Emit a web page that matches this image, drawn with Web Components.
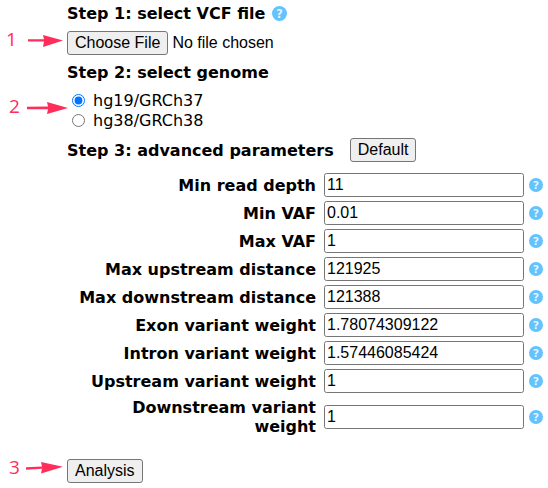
<!DOCTYPE html>
<html>
<head>
<meta charset="utf-8">
<style>
  html, body { margin: 0; padding: 0; background: #fff; }
  body { width: 548px; height: 488px; overflow: hidden; position: relative; font-family: "DejaVu Sans", sans-serif; color: #000; }
</style>
</head>
<body>
<vcf-form></vcf-form>

<template id="help-tpl">
  <style>
    :host { display: inline-block; width: 14px; height: 14px; line-height: 0; }
    svg { width: 100%; height: 100%; }
  </style>
  <svg viewBox="0 0 14 14">
    <circle cx="7" cy="7" r="7" fill="#62c3fd"/>
    <text x="7" y="11" text-anchor="middle" font-family="DejaVu Sans, sans-serif" font-size="11" font-weight="bold" fill="#dff3fe">?</text>
  </svg>
</template>

<template id="arrow-tpl">
  <style>
    :host { position: absolute; display: block; left: var(--x); top: var(--y); width: 70px; height: 24px; }
    span { position: absolute; left: 0; top: -2px; color: #ff2d5a; font: 19px/24px "Open Sans", sans-serif; }
    svg { position: absolute; left: 0; top: 0; }
  </style>
  <span><slot></slot></span>
  <svg width="70" height="24" viewBox="0 0 70 24"><path fill="#ff2d5a"/></svg>
</template>

<template id="row-tpl">
  <style>
    :host { display: grid; grid-template-columns: 249px 200px 14px; column-gap: 8px; align-items: center; margin-left: 67px; min-height: 24px; margin-bottom: 4px; }
    label { font: bold 16px/19px "DejaVu Sans", sans-serif; text-align: right; padding: 1px 0; }
    input { box-sizing: border-box; width: 200px; height: 24px; margin: 0; padding: 1px 2px; border: 1px solid #767676; border-radius: 2.5px; font: 16px "Liberation Sans", Arial, sans-serif; color: #000; background: #fff; outline: none; }
    help-icon { margin-left: -3px; }
  </style>
  <label><slot></slot></label>
  <input type="text">
  <help-icon></help-icon>
</template>

<template id="form-tpl">
  <style>
    :host { display: block; padding: 0; position: relative; height: 488px; }
    .head { font: bold 16px/19px "DejaVu Sans", sans-serif; margin-left: 67px; display: flex; align-items: center; }
    button { box-sizing: border-box; height: 24px; margin: 0; padding: 1px 7px; font: 16px "Liberation Sans", Arial, sans-serif; color: #000; background: #efefef; border: 1px solid #767676; border-radius: 3px; }
    .s1 { padding-top: 4px; }
    .s1 help-icon { margin-left: 7px; width: 15px; height: 15px; }
    .file { margin: 8px 0 0 67px; display: flex; align-items: center; font: 16px/24px "Liberation Sans", Arial, sans-serif; }
    .file span { margin-left: 4px; }
    .s2 { margin-top: 8px; }
    .radios { margin: 8px 0 0 72px; font: 16px/20px "DejaVu Sans", sans-serif; }
    .radios div { display: flex; align-items: center; height: 20px; }
    .radios span { padding-top: 2px; }
    .radios input { width: 13px; height: 13px; margin: 0 8px 0 0; accent-color: #0075ff; }
    .s3 { margin-top: 8px; height: 24px; margin-bottom: 11px; }
    .s3 button { margin-left: 16px; }
    .go { margin: 22px 0 0 67px; }
  </style>
  <div class="head s1">Step 1: select VCF file<help-icon></help-icon></div>
  <div class="file"><button>Choose File</button><span>No file chosen</span></div>
  <div class="head s2">Step 2: select genome</div>
  <div class="radios">
    <div><input type="radio" name="genome" checked><span>hg19/GRCh37</span></div>
    <div><input type="radio" name="genome"><span>hg38/GRCh38</span></div>
  </div>
  <div class="head s3">Step 3: advanced parameters<button>Default</button></div>
  <param-row value="11">Min read depth</param-row>
  <param-row value="0.01">Min VAF</param-row>
  <param-row value="1">Max VAF</param-row>
  <param-row value="121925">Max upstream distance</param-row>
  <param-row value="121388">Max downstream distance</param-row>
  <param-row value="1.78074309122">Exon variant weight</param-row>
  <param-row value="1.57446085424">Intron variant weight</param-row>
  <param-row value="1">Upstream variant weight</param-row>
  <param-row value="1">Downstream variant weight</param-row>
  <div class="go"><button>Analysis</button></div>
  <step-arrow style="--x:6px;--y:29px" d="M22 10.2 L38 10.2 L37 6 L57 11.5 L37 18 L38 12.6 L22 12.6 Z">1</step-arrow>
  <step-arrow style="--x:9px;--y:96px" d="M18 10.7 L39 10.5 L38 6 L59 12 L38 18 L39 13.2 L18 13.3 Z">2</step-arrow>
  <step-arrow style="--x:9px;--y:457px" d="M17 10.2 L33 9.4 L32 5 L54 9.8 L32 16.5 L33 11.8 L17 12.8 Z">3</step-arrow>
</template>

<script>
function stamp(el, id) {
  el.attachShadow({ mode: "open" });
  el.shadowRoot.appendChild(document.getElementById(id).content.cloneNode(true));
}

class HelpIcon extends HTMLElement {
  constructor() { super(); stamp(this, "help-tpl"); }
}
class StepArrow extends HTMLElement {
  constructor() { super(); stamp(this, "arrow-tpl"); }
  connectedCallback() {
    this.shadowRoot.querySelector("path").setAttribute("d", this.getAttribute("d"));
  }
}
class ParamRow extends HTMLElement {
  constructor() { super(); stamp(this, "row-tpl"); }
  connectedCallback() {
    this.shadowRoot.querySelector("input").value = this.getAttribute("value");
  }
}
class VcfForm extends HTMLElement {
  constructor() { super(); stamp(this, "form-tpl"); }
}

customElements.define("help-icon", HelpIcon);
customElements.define("step-arrow", StepArrow);
customElements.define("param-row", ParamRow);
customElements.define("vcf-form", VcfForm);
</script>
</body>
</html>
